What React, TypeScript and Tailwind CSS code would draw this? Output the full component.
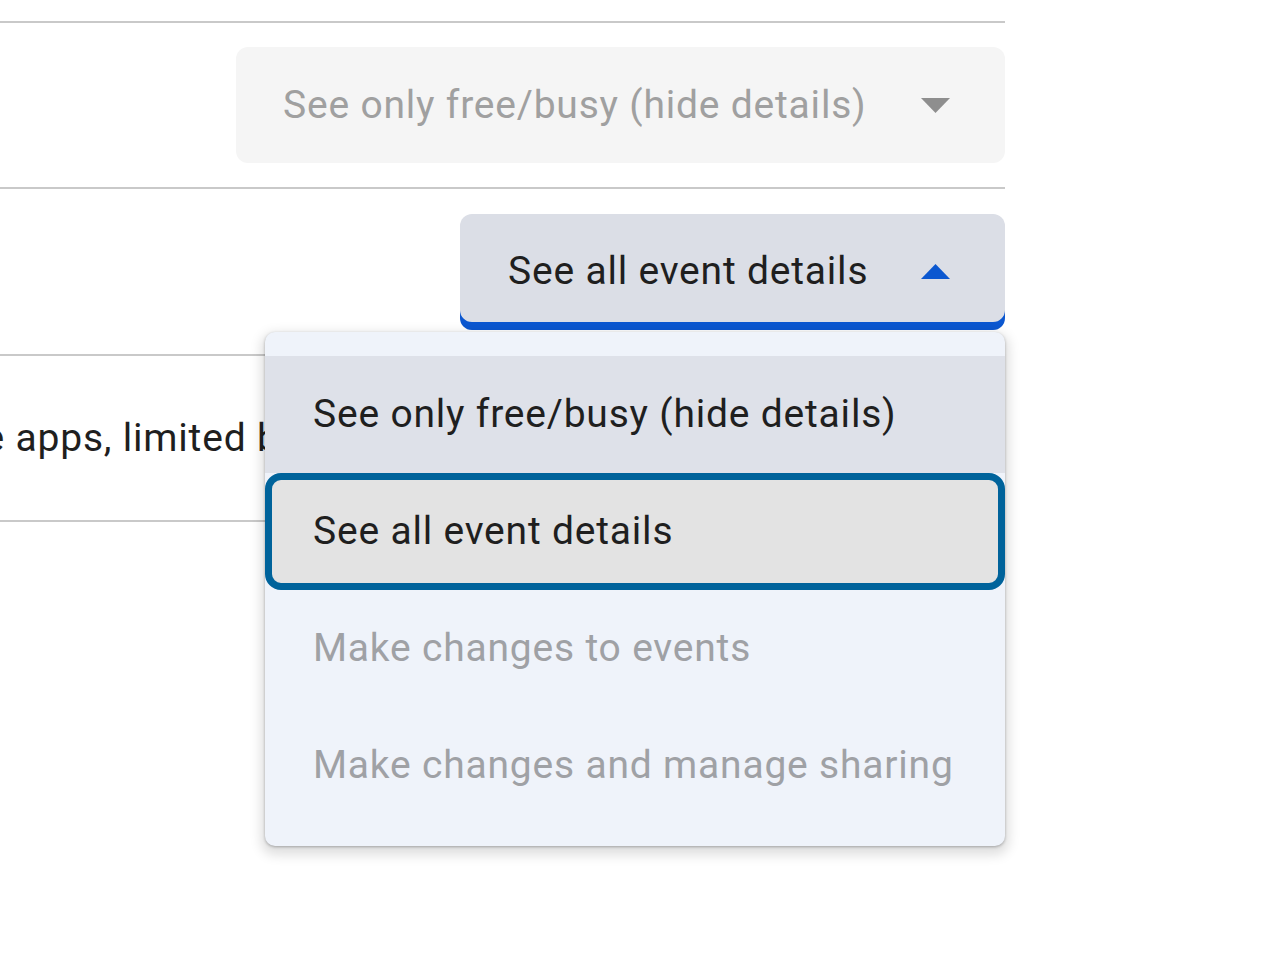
import React from "react";

const options = [
  { id: 1, label: "See only free/busy (hide details)", state: "hover" },
  { id: 2, label: "See all event details", state: "selected" },
  { id: 3, label: "Make changes to events", state: "disabled" },
  { id: 4, label: "Make changes and manage sharing", state: "disabled" },
];

const Caret = ({ up, color }: { up?: boolean; color: string }) => (
  <svg width="29" height="15" viewBox="0 0 29 15" className="shrink-0">
    {up ? (
      <polygon points="0,15 29,15 14.5,0" fill={color} />
    ) : (
      <polygon points="0,0 29,0 14.5,15" fill={color} />
    )}
  </svg>
);

const SettingsRows = () => {
  return (
    <div className="w-[1005px]">
      <div className="h-[23px] border-b-2 border-[#c9c9c9]" />

      {/* locked permission field */}
      <div className="h-[166px] border-b-2 border-[#c9c9c9] flex items-center justify-end">
        <div className="h-[116px] w-[769px] rounded-xl bg-[#f5f5f5] flex items-center pl-[47px] pr-[55px]">
          <span className="flex-1 text-[#a0a0a0] whitespace-nowrap">
            See only free/busy (hide details)
          </span>
          <Caret color="#8e8e8e" />
        </div>
      </div>

      {/* open permission dropdown */}
      <div className="relative z-10 h-[167px] border-b-2 border-[#c9c9c9] flex items-center justify-end">
        <div className="relative">
          <div className="h-[116px] w-[545px] rounded-xl bg-[#dbdee6] shadow-[inset_0_-8px_0_#0b57d0] flex items-center pl-12 pr-[55px]">
            <span className="flex-1 text-[#1f1f1f] whitespace-nowrap">
              See all event details
            </span>
            <Caret up color="#0b57d0" />
          </div>

          <div className="absolute right-0 top-[118px] w-[740px] rounded-[10px] bg-[#eff3fa] pt-6 pb-[22px] shadow-[0_5px_12px_4px_rgba(0,0,0,0.13),0_1px_3px_rgba(0,0,0,0.28)]">
            {options.map((opt) => (
              <div
                key={opt.id}
                className={
                  opt.state === "hover"
                    ? "h-[117px] flex items-center pl-12 bg-[#dee1e9] text-[#1f1f1f] whitespace-nowrap"
                    : opt.state === "selected"
                    ? "h-[117px] flex items-center pl-[41px] rounded-[16px] border-[7px] border-[#00639b] bg-[#e3e3e3] text-[#1f1f1f] whitespace-nowrap"
                    : "h-[117px] flex items-center pl-12 text-[#9fa1a5] whitespace-nowrap"
                }
              >
                {opt.label}
              </div>
            ))}
          </div>
        </div>
      </div>

      {/* integration row, label runs off the left edge */}
      <div className="h-[166px] border-b-2 border-[#c9c9c9] flex items-center text-[#1f1f1f] whitespace-nowrap">
        <div className="w-[5px] shrink-0 flex justify-end">
          <span>Share with Google Workspace</span>
        </div>
        <span>&nbsp;apps, limited by your organization's admin settings</span>
      </div>
    </div>
  );
};

export default function App() {
  return (
    <div className="w-[1280px] h-[953px] overflow-hidden bg-white font-['Roboto',sans-serif] text-[39px] tracking-[0.8px] leading-none">
      <SettingsRows />
    </div>
  );
}
